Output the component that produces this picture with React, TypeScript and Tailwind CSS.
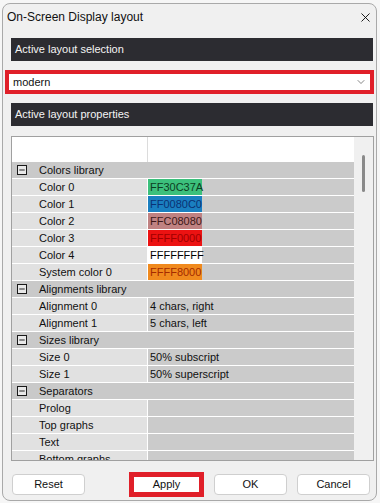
import { X, ChevronDown, Minus } from 'lucide-react'

type Row =
  | { kind: 'group'; label: string }
  | { kind: 'item'; label: string; value?: string; swatch?: string; ink?: string }

const rows: Row[] = [
  { kind: 'group', label: 'Colors library' },
  { kind: 'item', label: 'Color 0', value: 'FF30C37A', swatch: 'bg-[#3cc07c]', ink: 'text-[#0d3d22]' },
  { kind: 'item', label: 'Color 1', value: 'FF0080C0', swatch: 'bg-[#1a7fc0]', ink: 'text-[#0b3274]' },
  { kind: 'item', label: 'Color 2', value: 'FFC08080', swatch: 'bg-[#c08282]', ink: 'text-[#3d1818]' },
  { kind: 'item', label: 'Color 3', value: 'FFFF0000', swatch: 'bg-[#ec1212]', ink: 'text-[#a00000]' },
  { kind: 'item', label: 'Color 4', value: 'FFFFFFFF', swatch: 'bg-white', ink: 'text-black' },
  { kind: 'item', label: 'System color 0', value: 'FFFF8000', swatch: 'bg-[#f08a1e]', ink: 'text-[#a52a00]' },
  { kind: 'group', label: 'Alignments library' },
  { kind: 'item', label: 'Alignment 0', value: '4 chars, right' },
  { kind: 'item', label: 'Alignment 1', value: '5 chars, left' },
  { kind: 'group', label: 'Sizes library' },
  { kind: 'item', label: 'Size 0', value: '50% subscript' },
  { kind: 'item', label: 'Size 1', value: '50% superscript' },
  { kind: 'group', label: 'Separators' },
  { kind: 'item', label: 'Prolog' },
  { kind: 'item', label: 'Top graphs' },
  { kind: 'item', label: 'Text' },
  { kind: 'item', label: 'Bottom graphs' },
]

function GridRow({ row }: { row: Row }) {
  if (row.kind === 'group') {
    return (
      <div className="flex h-[17px] shrink-0 items-center border-b border-white bg-[#c9c9c9]">
        <div className="ml-[5px] flex h-[10px] w-[10px] items-center justify-center border border-[#1a1a1a] bg-[#e8e8e8]">
          <Minus size={8} strokeWidth={2.5} className="text-black" />
        </div>
        <span className="ml-[12px] leading-none">{row.label}</span>
      </div>
    )
  }
  return (
    <div className="flex h-[17px] shrink-0 border-b border-white">
      <div className="flex w-[136px] shrink-0 items-center border-r border-white bg-[#e1e1e1] pl-[27px] leading-none">
        {row.label}
      </div>
      <div className="flex flex-1 bg-[#cbcbcb]">
        {row.swatch ? (
          <div className={`flex w-[54px] items-center pl-[2px] leading-none ${row.swatch} ${row.ink}`}>
            {row.value}
          </div>
        ) : (
          <div className="flex items-center pl-[2px] leading-none">{row.value}</div>
        )}
      </div>
    </div>
  )
}

function DarkBar({ label }: { label: string }) {
  return (
    <div className="ml-[8px] flex h-[23px] w-[362px] items-center bg-[#2c2c31] pl-[4px] text-[#f4f4f4]">
      {label}
    </div>
  )
}

function Button({ label }: { label: string }) {
  return (
    <div className="flex h-[21px] w-[73px] items-center justify-center rounded-[4px] border border-[#cfcfcf] bg-white">
      {label}
    </div>
  )
}

export default function App() {
  return (
    <div className="h-[503px] w-[380px] overflow-hidden bg-[#f6f6f6] pl-[2px] pt-[3px] text-[11px] text-[#111] [font-family:'Liberation_Sans',Arial,sans-serif]">
      <div className="flex h-[498px] w-[375px] flex-col rounded-[8px] border border-[#a9a9a9] bg-[#f0f0f0]">
        {/* Title */}
        <div className="flex h-[26px] items-center justify-between pl-[4px] pr-[3px]">
          <span className="text-[12px]">On-Screen Display layout</span>
          <X size={15} strokeWidth={1.4} className="text-black" />
        </div>

        <div className="mt-[8px]">
          <DarkBar label="Active layout selection" />
        </div>

        {/* Layout dropdown */}
        <div className="ml-[2px] mt-[9px] flex h-[24px] w-[369px] items-center border-[4px] border-[#e01f29] bg-white pl-[4px] pr-[3px]">
          <span className="flex-1 leading-none">modern</span>
          <ChevronDown size={12} strokeWidth={1.3} className="text-[#444]" />
        </div>

        <div className="mt-[9px]">
          <DarkBar label="Active layout properties" />
        </div>

        {/* Property grid */}
        <div className="ml-[8px] mt-[10px] flex h-[325px] w-[363px] border border-[#a0a0a0] bg-white">
          <div className="flex w-[342px] flex-col overflow-hidden">
            <div className="flex h-[25px] shrink-0">
              <div className="w-[136px] border-r border-[#dcdcdc]" />
            </div>
            {rows.map((r, i) => (
              <GridRow key={i} row={r} />
            ))}
          </div>
          <div className="flex flex-1 justify-center bg-[#f0f0f0] pt-[18px]">
            <div className="h-[37px] w-[3px] rounded-full bg-[#8a8a8a]" />
          </div>
        </div>

        {/* Buttons */}
        <div className="mt-[11px] flex items-center pl-[9px]">
          <Button label="Reset" />
          <div className="ml-[44px] flex h-[25px] w-[75px] items-center justify-center border-[5px] border-[#e01f29] bg-white">
            Apply
          </div>
          <div className="ml-[10px]">
            <Button label="OK" />
          </div>
          <div className="ml-[10px]">
            <Button label="Cancel" />
          </div>
        </div>
      </div>
    </div>
  )
}
